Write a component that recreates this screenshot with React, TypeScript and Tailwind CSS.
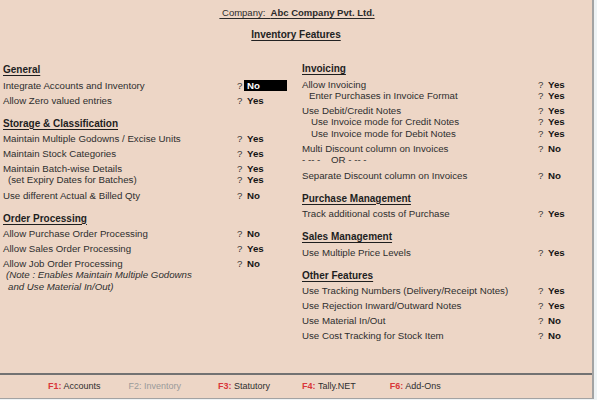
import React from 'react';

type Row = {
  label: string;
  value?: string;
  indent?: number;
  sub?: boolean;
  italic?: boolean;
  active?: boolean;
};

type Section = { title: string; rows: Row[] };

const leftSections: Section[] = [
  {
    title: 'General',
    rows: [
      { label: 'Integrate Accounts and Inventory', value: 'No', active: true },
      { label: 'Allow Zero valued entries', value: 'Yes' },
    ],
  },
  {
    title: 'Storage & Classification',
    rows: [
      { label: 'Maintain Multiple Godowns / Excise Units', value: 'Yes' },
      { label: 'Maintain Stock Categories', value: 'Yes' },
      { label: 'Maintain Batch-wise Details', value: 'Yes' },
      { label: '(set Expiry Dates for Batches)', value: 'Yes', indent: 5, sub: true },
      { label: 'Use different Actual & Billed Qty', value: 'No' },
    ],
  },
  {
    title: 'Order Processing',
    rows: [
      { label: 'Allow Purchase Order Processing', value: 'No' },
      { label: 'Allow Sales Order Processing', value: 'Yes' },
      { label: 'Allow Job Order Processing', value: 'No' },
      { label: '(Note : Enables Maintain Multiple Godowns', indent: 3, sub: true, italic: true },
      { label: 'and Use Material In/Out)', indent: 5, sub: true, italic: true },
    ],
  },
];

const rightSections: Section[] = [
  {
    title: 'Invoicing',
    rows: [
      { label: 'Allow Invoicing', value: 'Yes' },
      { label: 'Enter Purchases in Invoice Format', value: 'Yes', indent: 7, sub: true },
      { label: 'Use Debit/Credit Notes', value: 'Yes' },
      { label: 'Use Invoice mode for Credit Notes', value: 'Yes', indent: 9, sub: true },
      { label: 'Use Invoice mode for Debit Notes', value: 'Yes', indent: 9, sub: true },
      { label: 'Multi Discount column on Invoices', value: 'No' },
      { label: '- -- -    OR - -- -', sub: true },
      { label: 'Separate Discount column on Invoices', value: 'No' },
    ],
  },
  {
    title: 'Purchase Management',
    rows: [{ label: 'Track additional costs of Purchase', value: 'Yes' }],
  },
  {
    title: 'Sales Management',
    rows: [{ label: 'Use Multiple Price Levels', value: 'Yes' }],
  },
  {
    title: 'Other Features',
    rows: [
      { label: 'Use Tracking Numbers (Delivery/Receipt Notes)', value: 'Yes' },
      { label: 'Use Rejection Inward/Outward Notes', value: 'Yes' },
      { label: 'Use Material In/Out', value: 'No' },
      { label: 'Use Cost Tracking for Stock Item', value: 'No' },
    ],
  },
];

const footerKeys = [
  { key: 'F1:', label: 'Accounts', disabled: false, ml: 'ml-[48px]' },
  { key: 'F2:', label: 'Inventory', disabled: true, ml: 'ml-[28px]' },
  { key: 'F3:', label: 'Statutory', disabled: false, ml: 'ml-[37px]' },
  { key: 'F4:', label: 'Tally.NET', disabled: false, ml: 'ml-[32px]' },
  { key: 'F6:', label: 'Add-Ons', disabled: false, ml: 'ml-[34px]' },
];

function FeatureRow({ row, labelWidth }: { row: Row; labelWidth: string }) {
  return (
    <div
      className={
        row.sub
          ? 'flex h-[11.5px] leading-[8.5px] whitespace-pre'
          : 'flex h-[15px] leading-[15px] whitespace-pre'
      }
    >
      <span
        className={`${labelWidth} shrink-0 text-[#2e2e2e] ${row.italic ? 'italic' : ''}`}
        style={{ paddingLeft: row.indent ?? 0 }}
      >
        {row.label}
      </span>
      {row.value && (
        <>
          <span className="w-[10px] shrink-0 text-[#3a3a3a]">?</span>
          {row.active ? (
            <span className="-ml-[3px] inline-block h-[11px] w-[43px] self-center bg-black pl-[3px] font-bold leading-[11px] text-white">
              {row.value}
            </span>
          ) : (
            <span className="font-bold text-[#151515]">{row.value}</span>
          )}
        </>
      )}
    </div>
  );
}

function FeatureColumn({ sections, labelWidth }: { sections: Section[]; labelWidth: string }) {
  return (
    <div className="flex flex-col">
      {sections.map((s, i) => (
        <div key={s.title} className={i > 0 ? 'mt-[8px]' : ''}>
          <div className="h-[15.5px] text-[10px] font-bold leading-[15px] text-[#1e1e1e] underline underline-offset-[1.5px]">
            {s.title}
          </div>
          {s.rows.map((r, j) => (
            <FeatureRow key={j} row={r} labelWidth={labelWidth} />
          ))}
        </div>
      ))}
    </div>
  );
}

export default function App() {
  return (
    <div
      className="h-[400px] w-[597px] overflow-hidden bg-[#eef3f5] text-[9.7px]"
      style={{ fontFamily: '"Liberation Sans", Arial, sans-serif' }}
    >
      <div className="flex h-[399px] w-[594px] flex-col border-r-2 border-b border-[#a3a3a3] bg-[#edd6c6]">
        <div className="flex-1">
          <div className="flex flex-col items-center pt-[5px]">
            <div className="h-[15px] whitespace-pre pl-[2px] text-[9.5px] leading-[15px] text-[#2a2a2a] underline underline-offset-[1.5px]">
              {' Company:  '}
              <span className="font-bold">Abc Company Pvt. Ltd.</span>
            </div>
            <div className="mt-[7px] h-[15px] text-[10px] font-bold leading-[15px] text-[#222] underline underline-offset-[1.5px]">
              Inventory Features
            </div>
          </div>
          <div className="mt-[19px] grid grid-cols-[302px_1fr]">
            <div className="pl-[3px] pt-[1px]">
              <FeatureColumn sections={leftSections} labelWidth="w-[234px]" />
            </div>
            <FeatureColumn sections={rightSections} labelWidth="w-[236px]" />
          </div>
        </div>
        <div className="flex h-[25px] items-center border-t-2 border-[#727272] text-[9px]">
          {footerKeys.map((f) => (
            <div key={f.key} className={`${f.ml} whitespace-pre`}>
              <span className={f.disabled ? 'text-[#9a9a9a]' : 'font-bold text-[#d9363a]'}>{f.key}</span>
              <span className={f.disabled ? 'text-[#9a9a9a]' : 'text-[#2e2e2e]'}>{' ' + f.label}</span>
            </div>
          ))}
        </div>
      </div>
    </div>
  );
}
